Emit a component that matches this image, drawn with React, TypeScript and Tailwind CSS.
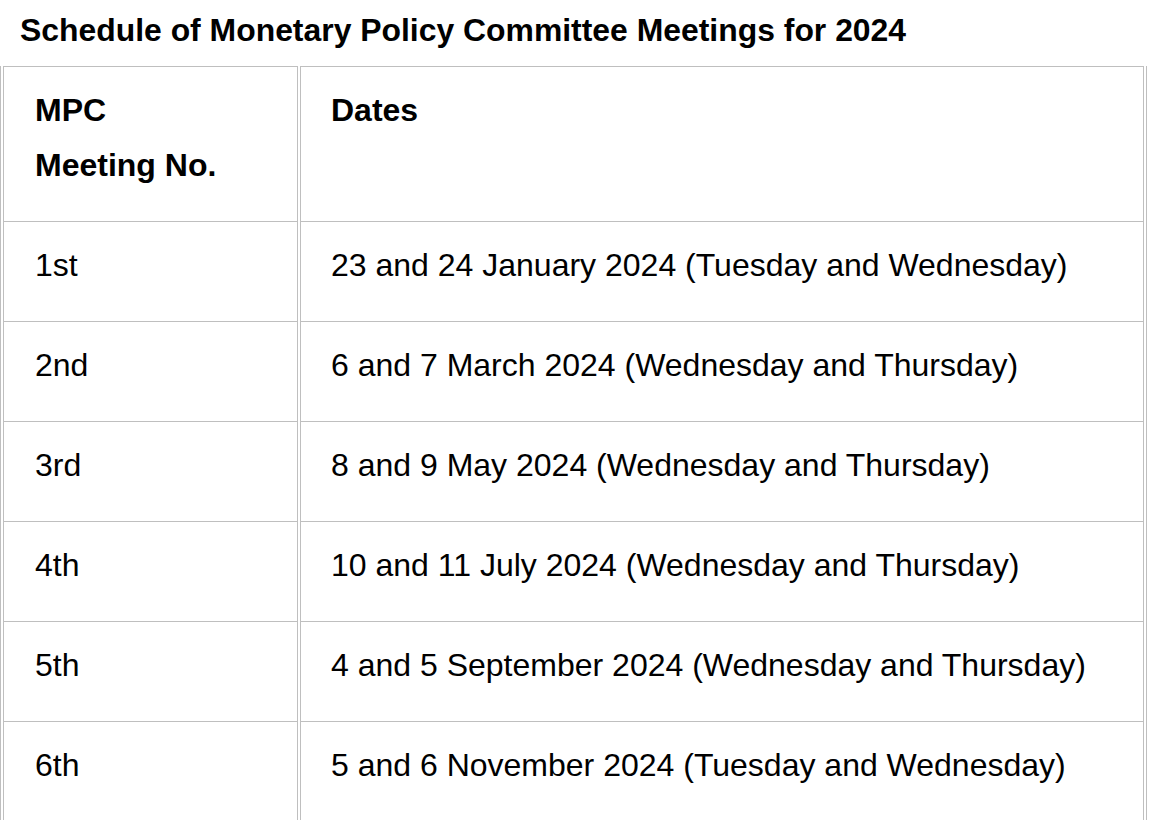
const meetings = [
  { no: '1st', dates: '23 and 24 January 2024 (Tuesday and Wednesday)' },
  { no: '2nd', dates: '6 and 7 March 2024 (Wednesday and Thursday)' },
  { no: '3rd', dates: '8 and 9 May 2024 (Wednesday and Thursday)' },
  { no: '4th', dates: '10 and 11 July 2024 (Wednesday and Thursday)' },
  { no: '5th', dates: '4 and 5 September 2024 (Wednesday and Thursday)' },
  { no: '6th', dates: '5 and 6 November 2024 (Tuesday and Wednesday)' },
];

const cell = 'border-t border-x border-[#bfbfbf] align-top pt-[16px] pb-[28px] text-left';

export default function App() {
  return (
    <div className="bg-white text-black w-[1149px] font-['Liberation_Sans',Arial,sans-serif]">
      {/* Title */}
      <h2 className="pl-[20px] pt-[10px] h-[66px] text-[31.9px] leading-[40px] font-bold">
        Schedule of Monetary Policy Committee Meetings for 2024
      </h2>

      <table className="w-[1147px] border-separate border-spacing-x-[2px] border-spacing-y-0 border-x border-[#bfbfbf] text-[32px] leading-[55px]">
        <thead>
          <tr>
            <th className={`${cell} w-[295px] pl-[31px] font-bold`}>
              MPC
              <br />
              Meeting No.
            </th>
            <th className={`${cell} pl-[30px] font-bold`}>Dates</th>
          </tr>
        </thead>
        <tbody>
          {meetings.map((m) => (
            <tr key={m.no}>
              <td className={`${cell} pl-[31px]`}>{m.no}</td>
              <td className={`${cell} pl-[30px]`}>{m.dates}</td>
            </tr>
          ))}
        </tbody>
      </table>
    </div>
  );
}
